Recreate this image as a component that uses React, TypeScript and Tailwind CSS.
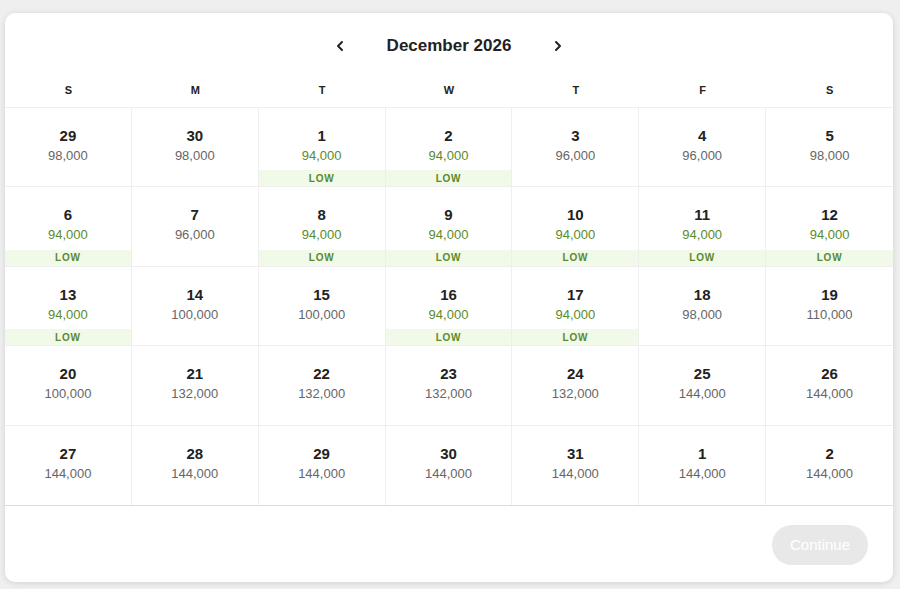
import type { ReactNode } from 'react';

type Day = { day: number; price: string; low?: boolean };

const weekdays = ['S', 'M', 'T', 'W', 'T', 'F', 'S'];

const weeks: Day[][] = [
  [
    { day: 29, price: '98,000' },
    { day: 30, price: '98,000' },
    { day: 1, price: '94,000', low: true },
    { day: 2, price: '94,000', low: true },
    { day: 3, price: '96,000' },
    { day: 4, price: '96,000' },
    { day: 5, price: '98,000' },
  ],
  [
    { day: 6, price: '94,000', low: true },
    { day: 7, price: '96,000' },
    { day: 8, price: '94,000', low: true },
    { day: 9, price: '94,000', low: true },
    { day: 10, price: '94,000', low: true },
    { day: 11, price: '94,000', low: true },
    { day: 12, price: '94,000', low: true },
  ],
  [
    { day: 13, price: '94,000', low: true },
    { day: 14, price: '100,000' },
    { day: 15, price: '100,000' },
    { day: 16, price: '94,000', low: true },
    { day: 17, price: '94,000', low: true },
    { day: 18, price: '98,000' },
    { day: 19, price: '110,000' },
  ],
  [
    { day: 20, price: '100,000' },
    { day: 21, price: '132,000' },
    { day: 22, price: '132,000' },
    { day: 23, price: '132,000' },
    { day: 24, price: '132,000' },
    { day: 25, price: '144,000' },
    { day: 26, price: '144,000' },
  ],
  [
    { day: 27, price: '144,000' },
    { day: 28, price: '144,000' },
    { day: 29, price: '144,000' },
    { day: 30, price: '144,000' },
    { day: 31, price: '144,000' },
    { day: 1, price: '144,000' },
    { day: 2, price: '144,000' },
  ],
];

function Chevron({ dir }: { dir: 'left' | 'right' }) {
  return (
    <svg width="10" height="12" viewBox="0 0 10 12" fill="none" stroke="#222" strokeWidth="2" strokeLinecap="round" strokeLinejoin="round">
      {dir === 'left' ? <polyline points="7,2 3,6 7,10" /> : <polyline points="3,2 7,6 3,10" />}
    </svg>
  );
}

function NavButton({ children, label }: { children: ReactNode; label: string }) {
  return (
    <button aria-label={label} className="w-6 h-6 flex items-center justify-center">
      {children}
    </button>
  );
}

function DayCell({ d, last }: { d: Day; last: boolean }) {
  return (
    <div className={`flex flex-col items-center pt-[18px] ${last ? '' : 'border-r border-[#efefef]'}`}>
      <span className="text-[15px] leading-[20px] font-semibold text-[#222]">{d.day}</span>
      <span className={`text-[13px] leading-[19px] ${d.low ? 'text-[#5b8a2c]' : 'text-[#666]'}`}>{d.price}</span>
      {d.low && (
        <span className="mt-auto w-full h-4 flex items-center justify-center bg-[#f1f9e8] text-[10px] font-bold tracking-[0.08em] text-[#5b8a2c]">
          LOW
        </span>
      )}
    </div>
  );
}

export default function App() {
  return (
    <div className="w-[900px] h-[589px] bg-[#efefef] pl-[5px] pr-[7px] pt-[13px] pb-[7px] font-['Liberation_Sans',Arial,sans-serif]">
      <div className="h-full bg-white rounded-[10px] shadow-[0_1px_6px_rgba(0,0,0,0.12)] flex flex-col overflow-hidden">
        <div className="h-[66px] flex items-center justify-center">
          <NavButton label="Previous month">
            <Chevron dir="left" />
          </NavButton>
          <h2 className="mx-[35px] text-[17px] font-semibold text-[#222] text-center">December 2026</h2>
          <NavButton label="Next month">
            <Chevron dir="right" />
          </NavButton>
        </div>

        <div className="grid grid-cols-7 h-[29px] pb-[6px] items-center border-b border-[#efefef]">
          {weekdays.map((w, i) => (
            <span key={i} className="text-center text-[11px] font-bold text-[#222]">
              {w}
            </span>
          ))}
        </div>

        <div className="grid grid-rows-5 h-[398px] border-b border-[#dcdcdc]">
          {weeks.map((week, r) => (
            <div key={r} className={`grid grid-cols-7 ${r < weeks.length - 1 ? 'border-b border-[#efefef]' : ''}`}>
              {week.map((d, c) => (
                <DayCell key={c} d={d} last={c === week.length - 1} />
              ))}
            </div>
          ))}
        </div>

        <div className="flex-1 flex justify-end items-start pt-[19px] pr-[25px]">
          <button disabled className="w-[96px] h-[40px] rounded-full bg-[#e8e8e8] text-white text-[15px]">
            Continue
          </button>
        </div>
      </div>
    </div>
  );
}
